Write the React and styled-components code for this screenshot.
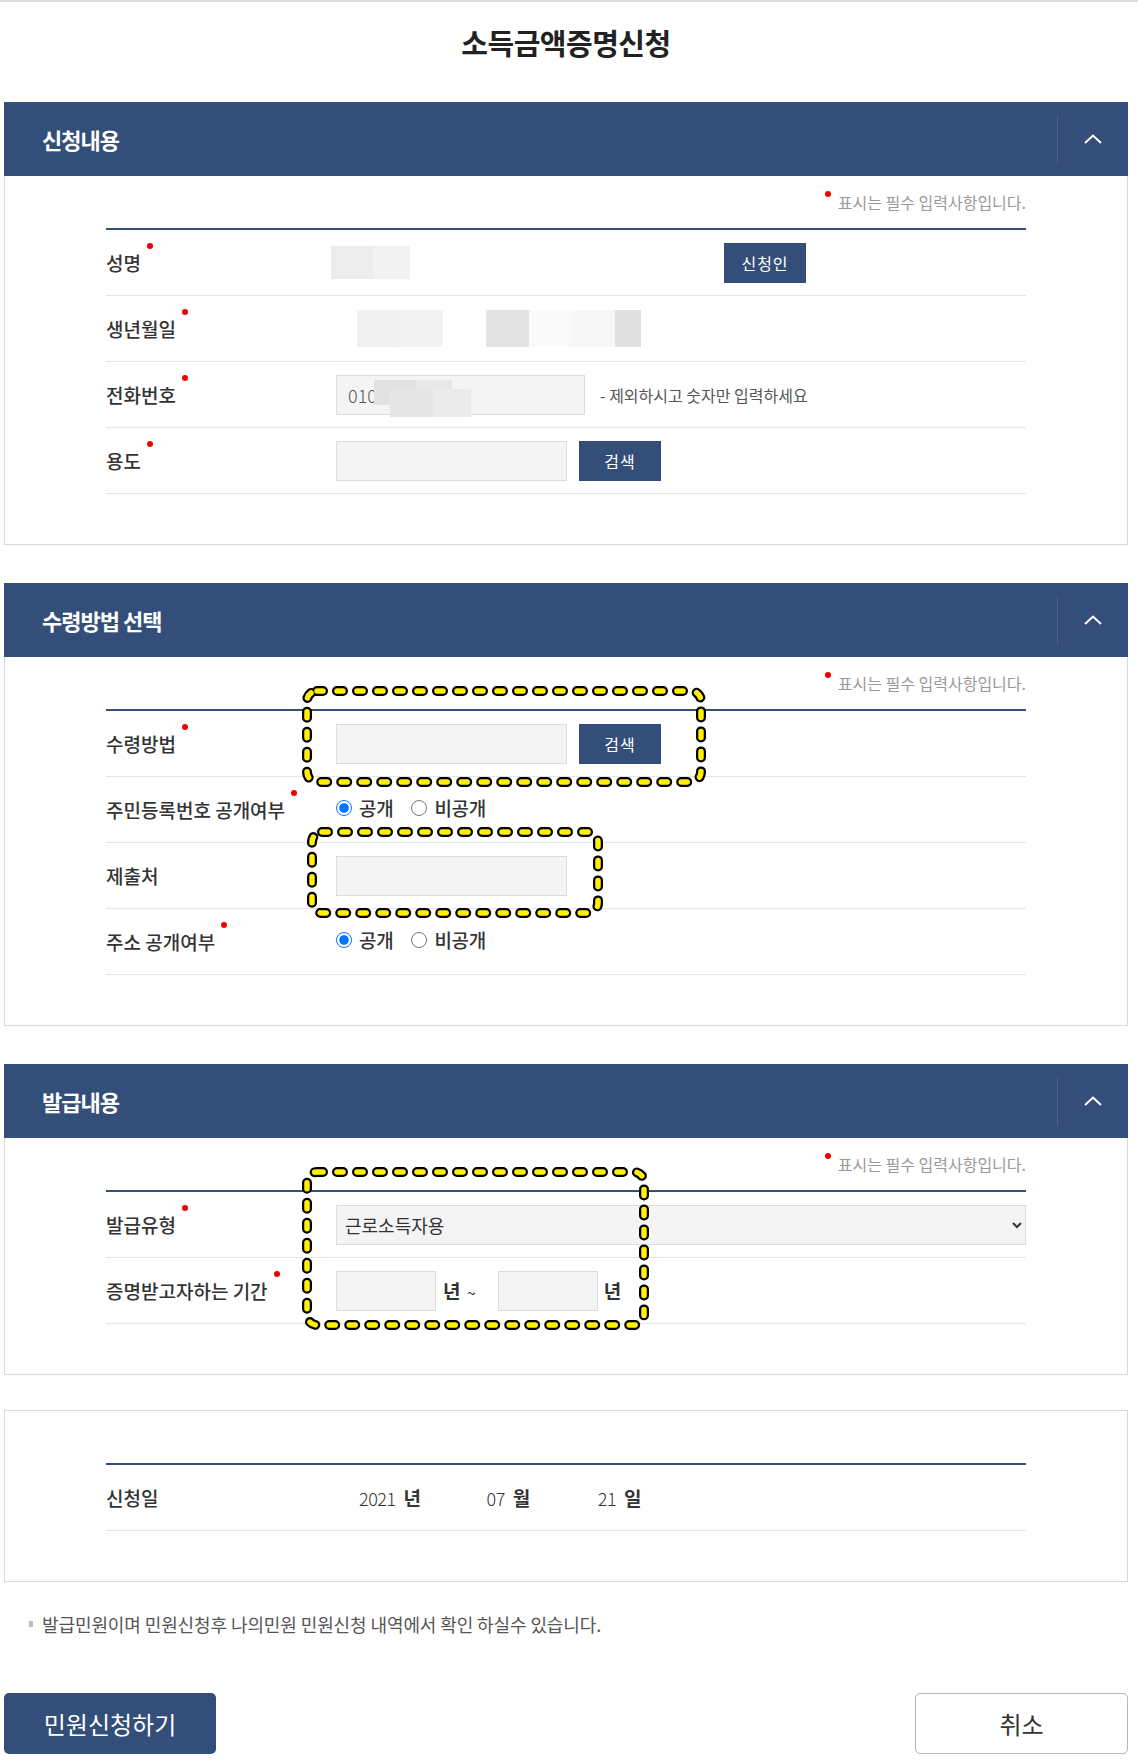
import React from 'react';
import styled, { createGlobalStyle } from 'styled-components';

const NAVY = '#344e7a';

const GlobalStyle = createGlobalStyle`
  html, body {
    margin: 0;
    padding: 0;
    background: #fff;
  }
  body {
    font-family: "Noto Sans CJK KR", "Noto Sans", sans-serif;
    color: #333;
  }
  * {
    box-sizing: border-box;
  }
`;

const ChevronUp = () => (
  <svg width="18" height="10" viewBox="0 0 18 10" fill="none">
    <polyline points="1,9 9,1.5 17,9" stroke="#fff" strokeWidth="2" />
  </svg>
);

const App = () => {
  return (
    <>
      <GlobalStyle />
      <Page>
        <Title>소득금액증명신청</Title>

        <Panel>
          <PanelHead>
            <HeadTitle>신청내용</HeadTitle>
            <Toggle>
              <ChevronUp />
            </Toggle>
          </PanelHead>
          <PanelBody>
            <RequiredNote>
              <NoteDot />
              표시는 필수 입력사항입니다.
            </RequiredNote>
            <Table>
              <Row>
                <Label>
                  성명<Dot />
                </Label>
                <Cell>
                  <Mosaic $shift={-5}>
                    <Blur $w={43} $h={33} $c="#ececec" />
                    <Blur $w={36} $h={33} $c="#f3f3f3" />
                  </Mosaic>
                  <SmallButton $ml={314}>신청인</SmallButton>
                </Cell>
              </Row>
              <Row>
                <Label>
                  생년월일<Dot />
                </Label>
                <Cell>
                  <Mosaic $shift={21}>
                    <Blur $w={42} $h={37} $c="#f0f0f0" />
                    <Blur $w={44} $h={37} $c="#f3f3f3" />
                  </Mosaic>
                  <Mosaic $shift={43}>
                    <Blur $w={43} $h={37} $c="#e4e4e4" />
                    <Blur $w={43} $h={37} $c="#fafafa" />
                    <Blur $w={43} $h={37} $c="#f7f7f7" />
                    <Blur $w={26} $h={37} $c="#e0e0e0" />
                  </Mosaic>
                </Cell>
              </Row>
              <Row>
                <Label>
                  전화번호<Dot />
                </Label>
                <Cell $gap={15}>
                  <PhoneWrap>
                    <TextInput $w={249} defaultValue="010" readOnly />
                    <Smudge style={{ left: 38, top: 5, width: 42, height: 25 }} $c="#e2e2e2" />
                    <Smudge style={{ left: 80, top: 5, width: 36, height: 25 }} $c="#e8e8e8" />
                    <Smudge style={{ left: 54, top: 14, width: 43, height: 28 }} $c="#e6e6e6" />
                    <Smudge style={{ left: 97, top: 14, width: 38, height: 28 }} $c="#ebebeb" />
                  </PhoneWrap>
                  <Hint>- 제외하시고 숫자만 입력하세요</Hint>
                </Cell>
              </Row>
              <Row>
                <Label>
                  용도<Dot />
                </Label>
                <Cell $gap={12}>
                  <TextInput $w={231} />
                  <SmallButton>검색</SmallButton>
                </Cell>
              </Row>
            </Table>
          </PanelBody>
        </Panel>

        <Panel>
          <PanelHead>
            <HeadTitle>수령방법 선택</HeadTitle>
            <Toggle>
              <ChevronUp />
            </Toggle>
          </PanelHead>
          <PanelBody>
            <RequiredNote>
              <NoteDot />
              표시는 필수 입력사항입니다.
            </RequiredNote>
            <Table>
              <Row>
                <Label>
                  수령방법<Dot />
                </Label>
                <Cell $gap={12}>
                  <TextInput $w={231} />
                  <SmallButton>검색</SmallButton>
                </Cell>
              </Row>
              <Row>
                <Label>
                  주민등록번호 공개여부<Dot />
                </Label>
                <Cell>
                  <RadioGroup>
                    <RadioLabel>
                      <Radio type="radio" name="jumin" defaultChecked />
                      공개
                    </RadioLabel>
                    <RadioLabel>
                      <Radio type="radio" name="jumin" />
                      비공개
                    </RadioLabel>
                  </RadioGroup>
                </Cell>
              </Row>
              <Row>
                <Label>제출처</Label>
                <Cell>
                  <TextInput $w={231} />
                </Cell>
              </Row>
              <Row>
                <Label>
                  주소 공개여부<Dot />
                </Label>
                <Cell>
                  <RadioGroup>
                    <RadioLabel>
                      <Radio type="radio" name="addr" defaultChecked />
                      공개
                    </RadioLabel>
                    <RadioLabel>
                      <Radio type="radio" name="addr" />
                      비공개
                    </RadioLabel>
                  </RadioGroup>
                </Cell>
              </Row>
            </Table>
          </PanelBody>
        </Panel>

        <Panel $mb={35}>
          <PanelHead>
            <HeadTitle>발급내용</HeadTitle>
            <Toggle>
              <ChevronUp />
            </Toggle>
          </PanelHead>
          <PanelBody>
            <RequiredNote>
              <NoteDot />
              표시는 필수 입력사항입니다.
            </RequiredNote>
            <Table>
              <Row>
                <Label>
                  발급유형<Dot />
                </Label>
                <Cell>
                  <Select defaultValue="근로소득자용">
                    <option>근로소득자용</option>
                    <option>사업소득자용</option>
                    <option>종합소득세 신고자용</option>
                  </Select>
                </Cell>
              </Row>
              <Row>
                <Label>
                  증명받고자하는 기간<Dot />
                </Label>
                <Cell>
                  <TextInput $w={100} />
                  <Unit $ml={7} $mr={22}>
                    년 <Tilde>~</Tilde>
                  </Unit>
                  <TextInput $w={100} />
                  <Unit $ml={6}>년</Unit>
                </Cell>
              </Row>
            </Table>
          </PanelBody>
        </Panel>

        <Panel $mb={0}>
          <PanelBody $plain>
            <Table>
              <Row>
                <Label>신청일</Label>
                <Cell>
                  <DatePart $ml={23}>
                    2021<Unit $ml={8}>년</Unit>
                  </DatePart>
                  <DatePart $ml={66}>
                    07<Unit $ml={8}>월</Unit>
                  </DatePart>
                  <DatePart $ml={68}>
                    21<Unit $ml={8}>일</Unit>
                  </DatePart>
                </Cell>
              </Row>
            </Table>
          </PanelBody>
        </Panel>

        <Notice>발급민원이며 민원신청후 나의민원 민원신청 내역에서 확인 하실수 있습니다.</Notice>

        <Actions>
          <SubmitButton>민원신청하기</SubmitButton>
          <CancelButton>취소</CancelButton>
        </Actions>

        <Marks width="1138" height="1763" viewBox="0 0 1138 1763">
          <MarkBox x={307} y={691} w={394} h={91} />
          <MarkBox x={312} y={832} w={286} h={81} />
          <MarkBox x={307} y={1172} w={337} h={153} />
        </Marks>
      </Page>
    </>
  );
};

const MarkBox = ({ x, y, w, h }) => (
  <g>
    <rect
      x={x}
      y={y}
      width={w}
      height={h}
      rx="10"
      fill="none"
      stroke="#000"
      strokeWidth="10"
      strokeDasharray="6 14"
      strokeLinecap="round"
    />
    <rect
      x={x}
      y={y}
      width={w}
      height={h}
      rx="10"
      fill="none"
      stroke="#ffef00"
      strokeWidth="5.5"
      strokeDasharray="6 14"
      strokeLinecap="round"
    />
  </g>
);

export default App;

const Page = styled.div`
  position: relative;
  width: 1138px;
  min-height: 1763px;
  border-top: 2px solid #dedede;
  padding: 0 10px 9px 4px;
`;

const Title = styled.h1`
  margin: 0 0 39px;
  padding-top: 19px;
  line-height: 42px;
  font-size: 29px;
  font-weight: 700;
  letter-spacing: -0.5px;
  color: #222;
  text-align: center;
`;

const Panel = styled.section`
  margin-bottom: ${(p) => (p.$mb === undefined ? 38 : p.$mb)}px;
`;

const PanelHead = styled.div`
  display: flex;
  align-items: center;
  justify-content: space-between;
  height: 74px;
  padding-left: 38px;
  background: ${NAVY};
`;

const HeadTitle = styled.h2`
  margin: 0;
  font-size: 22px;
  font-weight: 700;
  letter-spacing: -1px;
  color: #fff;
`;

const Toggle = styled.button`
  display: flex;
  align-items: center;
  justify-content: center;
  width: 71px;
  height: 49px;
  padding: 0;
  border: 0;
  border-left: 1px solid #4a6189;
  background: transparent;
  cursor: pointer;
`;

const PanelBody = styled.div`
  padding: ${(p) => (p.$plain ? '52px' : '0')} 101px 50px;
  border: 1px solid #d8d8d8;
  border-top: ${(p) => (p.$plain ? '1px solid #d8d8d8' : '0')};
`;

const RequiredNote = styled.p`
  display: flex;
  justify-content: flex-end;
  align-items: flex-start;
  height: 52px;
  margin: 0;
  padding-top: 15px;
  font-size: 16px;
  line-height: 22px;
  letter-spacing: 0;
  color: #999;
`;

const NoteDot = styled.span`
  width: 6px;
  height: 6px;
  margin: 0 7px 0 0;
  border-radius: 50%;
  background: #ee0000;
`;

const Table = styled.div`
  border-top: 2px solid ${NAVY};
`;

const Row = styled.div`
  display: grid;
  grid-template-columns: 230px 1fr;
  height: 66px;
  border-bottom: 1px solid #e6e6e6;
`;

const Label = styled.div`
  display: flex;
  align-items: center;
  font-size: 19px;
  font-weight: 500;
  letter-spacing: 0;
  color: #333;
`;

const Dot = styled.span`
  width: 6px;
  height: 6px;
  margin: 0 0 0 6px;
  align-self: center;
  position: relative;
  top: -17px;
  border-radius: 50%;
  background: #ee0000;
`;

const Cell = styled.div`
  display: flex;
  align-items: center;
  gap: ${(p) => p.$gap || 0}px;
`;

const Mosaic = styled.div`
  display: flex;
  margin-left: ${(p) => p.$shift || 0}px;
`;

const Blur = styled.span`
  width: ${(p) => p.$w}px;
  height: ${(p) => p.$h}px;
  background: ${(p) => p.$c};
`;

const SmallButton = styled.button`
  width: ${(p) => p.$w || 82}px;
  height: 40px;
  margin-left: ${(p) => p.$ml || 0}px;
  padding: 0;
  border: 0;
  background: ${NAVY};
  color: #fff;
  font-family: inherit;
  font-size: 16px;
  letter-spacing: 1px;
  cursor: pointer;
`;

const TextInput = styled.input`
  width: ${(p) => p.$w}px;
  height: 40px;
  padding: 0 11px;
  border: 1px solid #dcdcdc;
  background: #f4f4f4;
  font-family: inherit;
  font-size: 18px;
  font-weight: 300;
  color: #555;
  outline: none;
`;

const PhoneWrap = styled.div`
  position: relative;
  display: flex;
`;

const Smudge = styled.span`
  position: absolute;
  background: ${(p) => p.$c};
`;

const Hint = styled.span`
  font-size: 16px;
  letter-spacing: 0;
  color: #555;
`;

const RadioGroup = styled.div`
  display: flex;
  align-items: center;
  gap: 18px;
  margin-top: -4px;
`;

const RadioLabel = styled.label`
  display: flex;
  align-items: center;
  gap: 7px;
  font-size: 19px;
  font-weight: 500;
  letter-spacing: -0.3px;
  color: #333;
`;

const Radio = styled.input`
  width: 16px;
  height: 16px;
  margin: 0;
`;

const Select = styled.select`
  width: 100%;
  height: 40px;
  padding: 0 4px;
  border: 1px solid #dcdcdc;
  border-radius: 0;
  background: #f4f4f4;
  font-family: inherit;
  font-size: 18px;
  color: #333;
  outline: none;
`;

const Unit = styled.span`
  margin-left: ${(p) => p.$ml || 0}px;
  margin-right: ${(p) => p.$mr || 0}px;
  font-size: 19px;
  font-weight: 700;
  color: #333;
`;

const Tilde = styled.span`
  margin-left: 2px;
  font-weight: 400;
  font-size: 16px;
`;

const DatePart = styled.span`
  margin-left: ${(p) => p.$ml}px;
  font-size: 18px;
  font-weight: 300;
  letter-spacing: -0.5px;
  color: #333;
`;

const Notice = styled.p`
  display: flex;
  align-items: center;
  margin: 32px 0 59px 25px;
  font-size: 18px;
  line-height: 20px;
  letter-spacing: -0.1px;
  color: #555;

  &::before {
    content: '';
    width: 4px;
    height: 6px;
    margin-right: 9px;
    background: #bbb;
  }
`;

const Actions = styled.div`
  display: flex;
  justify-content: space-between;
`;

const SubmitButton = styled.button`
  width: 212px;
  height: 61px;
  border: 0;
  border-radius: 5px;
  background: ${NAVY};
  color: #fff;
  font-family: inherit;
  font-size: 24px;
  letter-spacing: 0;
  cursor: pointer;
`;

const CancelButton = styled.button`
  width: 213px;
  height: 61px;
  border: 1px solid #b5b5b5;
  border-radius: 5px;
  background: #fff;
  color: #333;
  font-family: inherit;
  font-size: 24px;
  letter-spacing: 0;
  cursor: pointer;
`;

const Marks = styled.svg`
  position: absolute;
  left: 0;
  top: -2px;
  pointer-events: none;
`;
